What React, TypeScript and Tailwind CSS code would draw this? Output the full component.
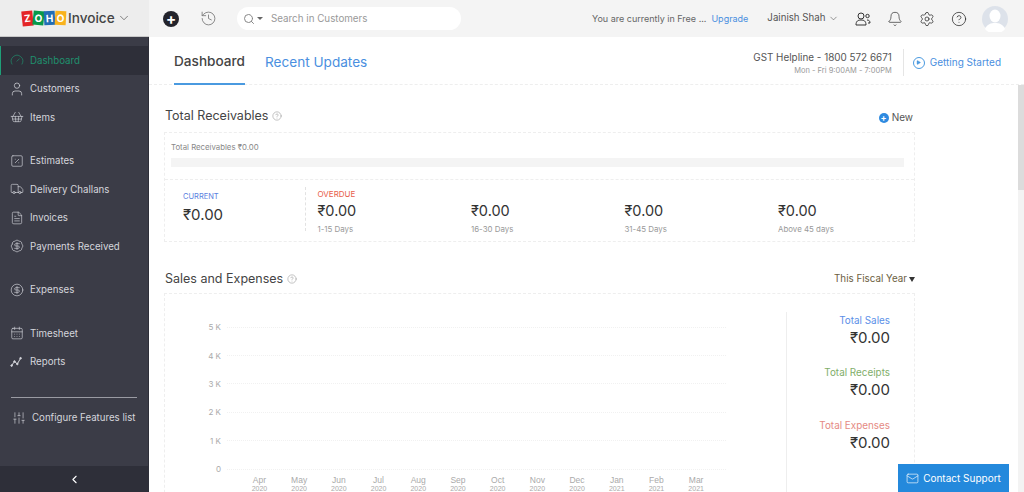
import { Bell, ChevronDown, ChevronLeft, CircleDollarSign, CalendarDays, CircleHelp, FileText, Gauge, History, Mail, BadgeDollarSign, Search, Settings, ShoppingBasket, SlidersVertical, SquarePercent, Truck, User, Play } from "lucide-react";
import type { ReactNode } from "react";

const ReportsIcon = () => (
  <svg width="13" height="13" viewBox="0 0 16 16" fill="none" stroke="currentColor" strokeWidth="1.2">
    <path d="M2 13l3.5-5 3.5 3 4-7" />
    <circle cx="2" cy="13" r="1" fill="currentColor" />
    <circle cx="5.5" cy="8" r="1" fill="currentColor" />
    <circle cx="9" cy="11" r="1" fill="currentColor" />
    <circle cx="13" cy="4" r="1" fill="currentColor" />
  </svg>
);

const NavItem = ({ icon, label, active }: { icon: ReactNode; label: string; active?: boolean }) => (
  <div className={active ? "flex h-[28.5px] items-center gap-[8px] border-l border-[#1f9e78] bg-[#2e2f39] pl-[10px] text-[#1f8f6d]" : "flex h-[28.5px] items-center gap-[8px] pl-[11px] text-[#d5d6dc]"}>
    <span className="flex w-[11px] justify-center [&>svg]:shrink-0">{icon}</span>
    <span className="mt-[2px] text-[9.7px]">{label}</span>
  </div>
);

const Logo = () => (
  <div className="flex items-center">
    <span className="flex h-[15px] w-[11px] -rotate-6 items-center justify-center bg-[#e42527] text-[10px] font-bold text-white">Z</span>
    <span className="flex h-[14px] w-[11px] rotate-6 items-center justify-center bg-[#089949] text-[10px] font-bold text-white">O</span>
    <span className="flex h-[14px] w-[11px] -rotate-3 items-center justify-center bg-[#226db4] text-[10px] font-bold text-white">H</span>
    <span className="flex h-[14px] w-[11px] rotate-3 items-center justify-center bg-[#f9b21d] text-[10px] font-bold text-white">O</span>
  </div>
);

const Bucket = ({ head, days, headClass }: { head?: string; days: string; headClass?: string }) => (
  <div className="w-[153.5px] shrink-0">
    <div className={"h-[12px] pt-[1px] text-[8px] leading-[12px] " + (headClass ?? "")}>{head}</div>
    <div className="mt-[2px] text-[14.5px] leading-[20px] text-[#333]">₹0.00</div>
    <div className="mt-[3px] text-[7.9px] leading-[10px] text-[#999]">{days}</div>
  </div>
);

const Stat = ({ label, color }: { label: string; color: string }) => (
  <div className="h-[52.5px] text-right">
    <div className={"text-[9.9px] leading-[14px] " + color}>{label}</div>
    <div className="text-[15px] leading-[22px] text-[#333]">₹0.00</div>
  </div>
);

const months = [["Apr", "2020"], ["May", "2020"], ["Jun", "2020"], ["Jul", "2020"], ["Aug", "2020"], ["Sep", "2020"], ["Oct", "2020"], ["Nov", "2020"], ["Dec", "2020"], ["Jan", "2021"], ["Feb", "2021"], ["Mar", "2021"]];

export default function App() {
  return (
    <div className="relative flex h-[492px] w-[1024px] flex-col overflow-hidden bg-white font-['Inter',sans-serif] text-[#444]">
      <header className="flex h-[37px] shrink-0 items-center bg-[#f4f4f4]">
        <div className="flex h-full w-[149px] items-center gap-[2px] border-b border-[#c8c8c8] bg-[#ededed] pl-[22px]">
          <Logo />
          <span className="text-[13.6px] font-medium text-[#444]">Invoice</span>
          <ChevronDown size={14} strokeWidth={1.1} />
        </div>
        <div className="ml-[14px] flex h-[16px] w-[16px] items-center justify-center rounded-full bg-[#22232b] text-[15px] leading-none font-bold text-white">+</div>
        <History size={17} strokeWidth={1.2} className="ml-[21px] text-[#777]" />
        <div className="ml-[20px] flex h-[23px] w-[224px] items-center rounded-full bg-white pl-[6px]">
          <Search size={12} className="shrink-0 text-[#888]" />
          <span className="ml-[2px] h-0 w-0 border-x-[3px] border-t-[3px] border-x-transparent border-t-[#666]" />
          <span className="ml-[8px] pt-[1px] text-[9.8px] text-[#999]">Search in Customers</span>
        </div>
        <span className="ml-[131px] text-[9px] text-[#666]">You are currently in Free ...</span>
        <span className="ml-[5px] mt-[1px] text-[9px] text-[#4a8fe0]">Upgrade</span>
        <span className="ml-[19px] text-[9.7px] text-[#555]">Jainish Shah</span>
        <ChevronDown size={11} strokeWidth={1.2} className="ml-[3px]" />
        <svg width="16" height="16" viewBox="0 0 16 16" fill="none" stroke="#333" strokeWidth="1" className="ml-[16px]">
          <circle cx="6" cy="5" r="3" />
          <path d="M1 14c0-4 2-5 5-5s5 1 5 5z" />
          <circle cx="12.5" cy="5" r="1.7" />
          <path d="M12 9c2 0 3 1 3 3h-2" />
        </svg>
        <Bell size={16} strokeWidth={1} className="ml-[16px] text-[#222]" />
        <Settings size={16} strokeWidth={1.1} className="ml-[16px] text-[#222]" />
        <CircleHelp size={16} strokeWidth={1.1} className="ml-[16px] text-[#222]" />
        <svg width="26" height="26" viewBox="0 0 26 26" className="ml-[15px]">
          <circle cx="13" cy="13" r="13" fill="#dde2ea" />
          <ellipse cx="13" cy="10" rx="5.5" ry="6.5" fill="#fff" />
          <path d="M3 23c2-5 6-6 10-6s8 1 10 6a13 13 0 0 1-20 0z" fill="#fff" />
        </svg>
      </header>

      <div className="flex min-h-0 flex-1">
        <aside className="flex w-[149px] shrink-0 flex-col border-r border-[#2e2f39] bg-[#3b3c47] pt-[9px]">
          <NavItem active label="Dashboard" icon={<Gauge size={14} strokeWidth={1.2} />} />
          <NavItem label="Customers" icon={<User size={16} strokeWidth={1.1} />} />
          <NavItem label="Items" icon={<ShoppingBasket size={14} strokeWidth={1.1} />} />
          <div className="h-[15px]" />
          <NavItem label="Estimates" icon={<SquarePercent size={14} strokeWidth={1.1} />} />
          <NavItem label="Delivery Challans" icon={<Truck size={14} strokeWidth={1.1} />} />
          <NavItem label="Invoices" icon={<FileText size={14} strokeWidth={1.1} />} />
          <NavItem label="Payments Received" icon={<BadgeDollarSign size={14} strokeWidth={1.1} />} />
          <div className="h-[15px]" />
          <NavItem label="Expenses" icon={<CircleDollarSign size={14} strokeWidth={1.1} />} />
          <div className="h-[15px]" />
          <NavItem label="Timesheet" icon={<CalendarDays size={14} strokeWidth={1.1} />} />
          <NavItem label="Reports" icon={<ReportsIcon />} />
          <div className="mx-[11px] mt-[21px] border-t border-[#9a9ba3]" />
          <div className="mt-[10px] flex h-[20px] items-center gap-[6px] pl-[12px] text-[#d5d6dc]">
            <SlidersVertical size={14} strokeWidth={1.1} className="shrink-0" />
            <span className="mt-[1px] text-[9.7px]">Configure Features list</span>
          </div>
          <div className="mt-auto flex h-[26px] items-center justify-center bg-[#2e2f39] text-white">
            <ChevronLeft size={13} strokeWidth={2} />
          </div>
        </aside>

        <main className="flex min-w-0 flex-1 flex-col">
          <div className="flex h-[48px] shrink-0 items-stretch border-b border-dashed border-[#eeeeee] pl-[25px]">
            <div className="flex h-[48px] w-[71px] items-center justify-center border-b-2 border-[#4a9ae0] pt-[3px] text-[13.6px] font-medium text-[#444]">Dashboard</div>
            <div className="ml-[20px] flex items-center pt-[3px] text-[13.6px] text-[#4a8fe0]">Recent Updates</div>
            <div className="ml-auto flex items-center pr-[23px] pt-[4px]">
              <div className="text-right">
                <div className="text-[9.9px] leading-[14px] text-[#555]">GST Helpline - 1800 572 6671</div>
                <div className="mt-[2px] text-[7.5px] leading-[10px] text-[#999]">Mon - Fri 9:00AM - 7:00PM</div>
              </div>
              <div className="ml-[11px] mr-[9px] h-[27px] border-l border-[#e5e5e5]" />
              <span className="flex h-[12px] w-[12px] items-center justify-center rounded-full border border-[#4a9ae0] text-[#4a9ae0]">
                <Play size={5} fill="currentColor" />
              </span>
              <span className="ml-[5px] text-[10px] text-[#4a8fe0]">Getting Started</span>
            </div>
          </div>

          <div className="flex min-h-0 flex-1">
            <div className="min-w-0 flex-1 pl-[15px]">
              <section className="w-[751px]">
                <div className="flex h-[47px] items-end justify-between pb-[7px] pl-[1px] pr-[2px]">
                  <div className="flex items-center gap-[4px]">
                    <span className="text-[12.5px] leading-[18px]">Total Receivables</span>
                    <CircleHelp size={10} strokeWidth={1.2} className="text-[#888]" />
                  </div>
                  <div className="flex items-center gap-[3px]">
                    <span className="flex h-[10px] w-[10px] items-center justify-center rounded-full bg-[#2e8ae0] text-[9px] leading-none font-bold text-white">+</span>
                    <span className="text-[10px] text-[#555]">New</span>
                  </div>
                </div>
                <div className="border border-dashed border-[#eeeeee]">
                  <div className="h-[47px] border-b border-dashed border-[#eeeeee] pl-[6px] pt-[9px] pr-[10px]">
                    <div className="text-[7.8px] leading-[11px] text-[#888]">Total Receivables ₹0.00</div>
                    <div className="mt-[5px] h-[9px] bg-[#f4f4f4]" />
                  </div>
                  <div className="flex h-[61px] items-stretch overflow-hidden pt-[7px]">
                    <div className="w-[139.5px] shrink-0 pl-[18px] pt-[4px]">
                      <div className="text-[7.5px] leading-[12px] text-[#5b7fe0]">CURRENT</div>
                      <div className="mt-[1px] text-[15px] leading-[22px] text-[#333]">₹0.00</div>
                    </div>
                    <div className="mb-[10px] border-l border-dashed border-[#e2e2e2]" />
                    <div className="flex pl-[12px]">
                      <Bucket head="OVERDUE" days="1-15 Days" headClass="text-[#e8604c]" />
                      <Bucket days="16-30 Days" />
                      <Bucket days="31-45 Days" />
                      <Bucket days="Above 45 days" />
                    </div>
                  </div>
                </div>
              </section>

              <section className="w-[751px]">
                <div className="flex h-[51px] items-end justify-between pb-[5px] pl-[1px]">
                  <div className="flex items-center gap-[4px]">
                    <span className="text-[12.5px] leading-[18px]">Sales and Expenses</span>
                    <CircleHelp size={10} strokeWidth={1.2} className="text-[#888]" />
                  </div>
                  <div className="mb-[1px] flex items-center gap-[2px]">
                    <span className="text-[9.8px] text-[#6b5e3e]">This Fiscal Year</span>
                    <span className="h-0 w-0 border-x-[3px] border-t-[5px] border-x-transparent border-t-[#333]" />
                  </div>
                </div>
                <div className="flex h-[220px] border border-b-0 border-dashed border-[#eeeeee]">
                  <div className="w-[621px] pl-[36px] pr-[60px] pt-[19px]">
                    {["5 K", "4 K", "3 K", "2 K", "1 K", "0"].map((t) => (
                      <div key={t} className="flex h-[28.4px] items-center">
                        <span className="w-[20px] text-right text-[8px] text-[#aaa]">{t}</span>
                        <span className="ml-[6px] flex-1 border-t border-dotted border-[#f1f1f1]" />
                      </div>
                    ))}
                    <div className="ml-[38.6px] mr-[10px] mt-[-7.7px] grid grid-cols-12 text-center font-['Liberation_Sans',sans-serif] text-[#aaa]">
                      {months.map(([m, y]) => (
                        <div key={m}>
                          <div className="text-[8.5px] leading-[9px]">{m}</div>
                          <div className="text-[7px] leading-[8px]">{y}</div>
                        </div>
                      ))}
                    </div>
                  </div>
                  <div className="mt-[18px] flex-1 border-l border-[#eee] pr-[24px] pt-[0.5px]">
                    <Stat label="Total Sales" color="text-[#5b8fe8]" />
                    <Stat label="Total Receipts" color="text-[#7fae6a]" />
                    <Stat label="Total Expenses" color="text-[#e58a84]" />
                  </div>
                </div>
              </section>
            </div>
            <div className="w-[6px] shrink-0 bg-[#f3f3f3]">
              <div className="h-[105px] bg-[#dcdcdc]" />
            </div>
          </div>
        </main>
      </div>

      <div className="absolute bottom-0 right-[15px] flex h-[28px] w-[111px] items-center justify-center gap-[4px] bg-[#2489dc] text-white">
        <Mail size={13} strokeWidth={1.2} />
        <span className="text-[10px]">Contact Support</span>
      </div>
    </div>
  );
}
